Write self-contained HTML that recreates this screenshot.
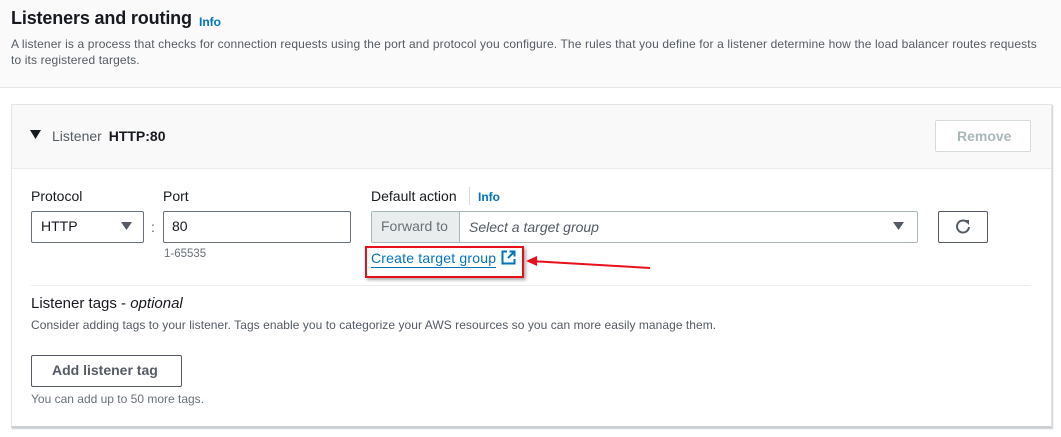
<!DOCTYPE html>
<html><head><meta charset="utf-8"><style>
*{box-sizing:border-box;margin:0;padding:0}
body{width:1061px;height:437px;background:#fff;font-family:"Liberation Sans",Arial,sans-serif;color:#16191f;position:relative;overflow:hidden}
.a{position:absolute;white-space:nowrap}
.top{position:absolute;left:0;top:0;width:1061px;height:88px;background:#fafafa;border-bottom:1px solid #e6e6e6}
.card{position:absolute;left:11px;top:104px;width:1041px;height:324px;border:1px solid #e4e4e4;border-bottom:2px solid #c9cfd3;box-shadow:1px 1px 1px #ccc}
.hdr{position:absolute;left:0;top:0;width:100%;height:64px;background:#f9f9f9;border-bottom:1px solid #eaeded}
.box{position:absolute;border:1px solid #687078;border-radius:2px;background:#fff}
.info{color:#0073bb;font-weight:bold;font-size:12px}
</style></head><body>
<div class="top"></div>
<div class="a" style="left:11px;top:8px;font-size:18px;font-weight:bold;letter-spacing:-0.15px">Listeners and routing</div>
<div class="a info" style="left:199px;top:15px;font-size:12px">Info</div>
<div class="a" style="left:11px;top:36px;font-size:12px;line-height:16px;color:#545b64;letter-spacing:0.13px">A listener is a process that checks for connection requests using the port and protocol you configure. The rules that you define for a listener determine how the load balancer routes requests<br>to its registered targets.</div>
<div class="card"><div class="hdr"></div></div>
<svg class="a" style="left:30px;top:130px" width="11" height="10"><path d="M0 0H11L5.5 9Z" fill="#16191f"/></svg>
<div class="a" style="left:52px;top:128px;font-size:14px;color:#545b64">Listener <b style="color:#16191f;margin-left:3px">HTTP:80</b></div>
<div class="box" style="left:935px;top:120px;width:96px;height:32px;border-color:#d5dbdb"></div>
<div class="a" style="left:957px;top:128px;font-size:14px;font-weight:bold;color:#aab7b8">Remove</div>
<div class="a" style="left:31px;top:188px;font-size:14px">Protocol</div>
<div class="a" style="left:163px;top:188px;font-size:14px">Port</div>
<div class="a" style="left:371px;top:188px;font-size:14px">Default action</div>
<div class="a" style="left:469px;top:187px;width:1px;height:18px;background:#d5dbdb"></div>
<div class="a info" style="left:478px;top:190px">Info</div>
<div class="box" style="left:31px;top:211px;width:113px;height:32px"></div>
<div class="a" style="left:41px;top:218px;font-size:14px">HTTP</div>
<svg class="a" style="left:121px;top:222px" width="11" height="9"><path d="M0 0H11L5.5 8Z" fill="#545b64"/></svg>
<div class="a" style="left:151px;top:219px;font-size:14px;color:#545b64">:</div>
<div class="box" style="left:163px;top:211px;width:188px;height:32px"></div>
<div class="a" style="left:172px;top:218px;font-size:14px">80</div>
<div class="a" style="left:164px;top:248px;font-size:11.5px;color:#687078">1-65535</div>
<div class="box" style="left:371px;top:211px;width:547px;height:32px;border-color:#aab7b8"></div>
<div class="a" style="left:372px;top:212px;width:88px;height:30px;background:#eaeded;border-right:1px solid #aab7b8"></div>
<div class="a" style="left:381px;top:218px;font-size:14px;color:#687078">Forward to</div>
<div class="a" style="left:469px;top:219px;font-size:14px;font-style:italic;color:#545b64">Select a target group</div>
<svg class="a" style="left:893px;top:222px" width="11" height="9"><path d="M0 0H11L5.5 8Z" fill="#545b64"/></svg>
<div class="box" style="left:938px;top:211px;width:50px;height:32px;border-color:#545b64"></div>
<svg class="a" style="left:954px;top:218px" width="18" height="18" viewBox="0 0 18 18"><path d="M13.5 4.5A6 6 0 1 0 15 9" fill="none" stroke="#545b64" stroke-width="2"/><path d="M10 2L15 2L15 7Z" fill="#545b64"/></svg>
<div class="a" style="left:365px;top:246px;width:159px;height:32px;border:2px solid #e8101a;box-shadow:2px 2px 3px #aaa"></div>
<div class="a" style="left:371px;top:250px;font-size:14px;color:#0073bb;border-bottom:1px solid #0073bb;line-height:17px;letter-spacing:0.2px">Create target group</div>
<svg class="a" style="left:501px;top:250px" width="15" height="15" viewBox="0 0 15 15"><path d="M6 1.5H1.5V13.5H13.5V9M8.5 1.5H13.5V6.5M13.5 1.5L7 8" fill="none" stroke="#0073bb" stroke-width="2"/></svg>
<svg class="a" style="left:520px;top:252px" width="140" height="24"><path d="M10 9L130 16" stroke="#e8101a" stroke-width="2"/><path d="M6 9L17 4L17 14Z" fill="#e8101a"/></svg>
<div class="a" style="left:31px;top:285px;width:1000px;height:1px;background:#eaeded"></div>
<div class="a" style="left:31px;top:295px;font-size:15px">Listener tags - <i>optional</i></div>
<div class="a" style="left:31px;top:318px;font-size:12px;color:#545b64;letter-spacing:0.05px">Consider adding tags to your listener. Tags enable you to categorize your AWS resources so you can more easily manage them.</div>
<div class="box" style="left:31px;top:355px;width:151px;height:32px;border-color:#545b64"></div>
<div class="a" style="left:52px;top:362px;font-size:14px;font-weight:bold;color:#545b64">Add listener tag</div>
<div class="a" style="left:31px;top:392px;font-size:12px;color:#687078">You can add up to 50 more tags.</div>
</body></html>
